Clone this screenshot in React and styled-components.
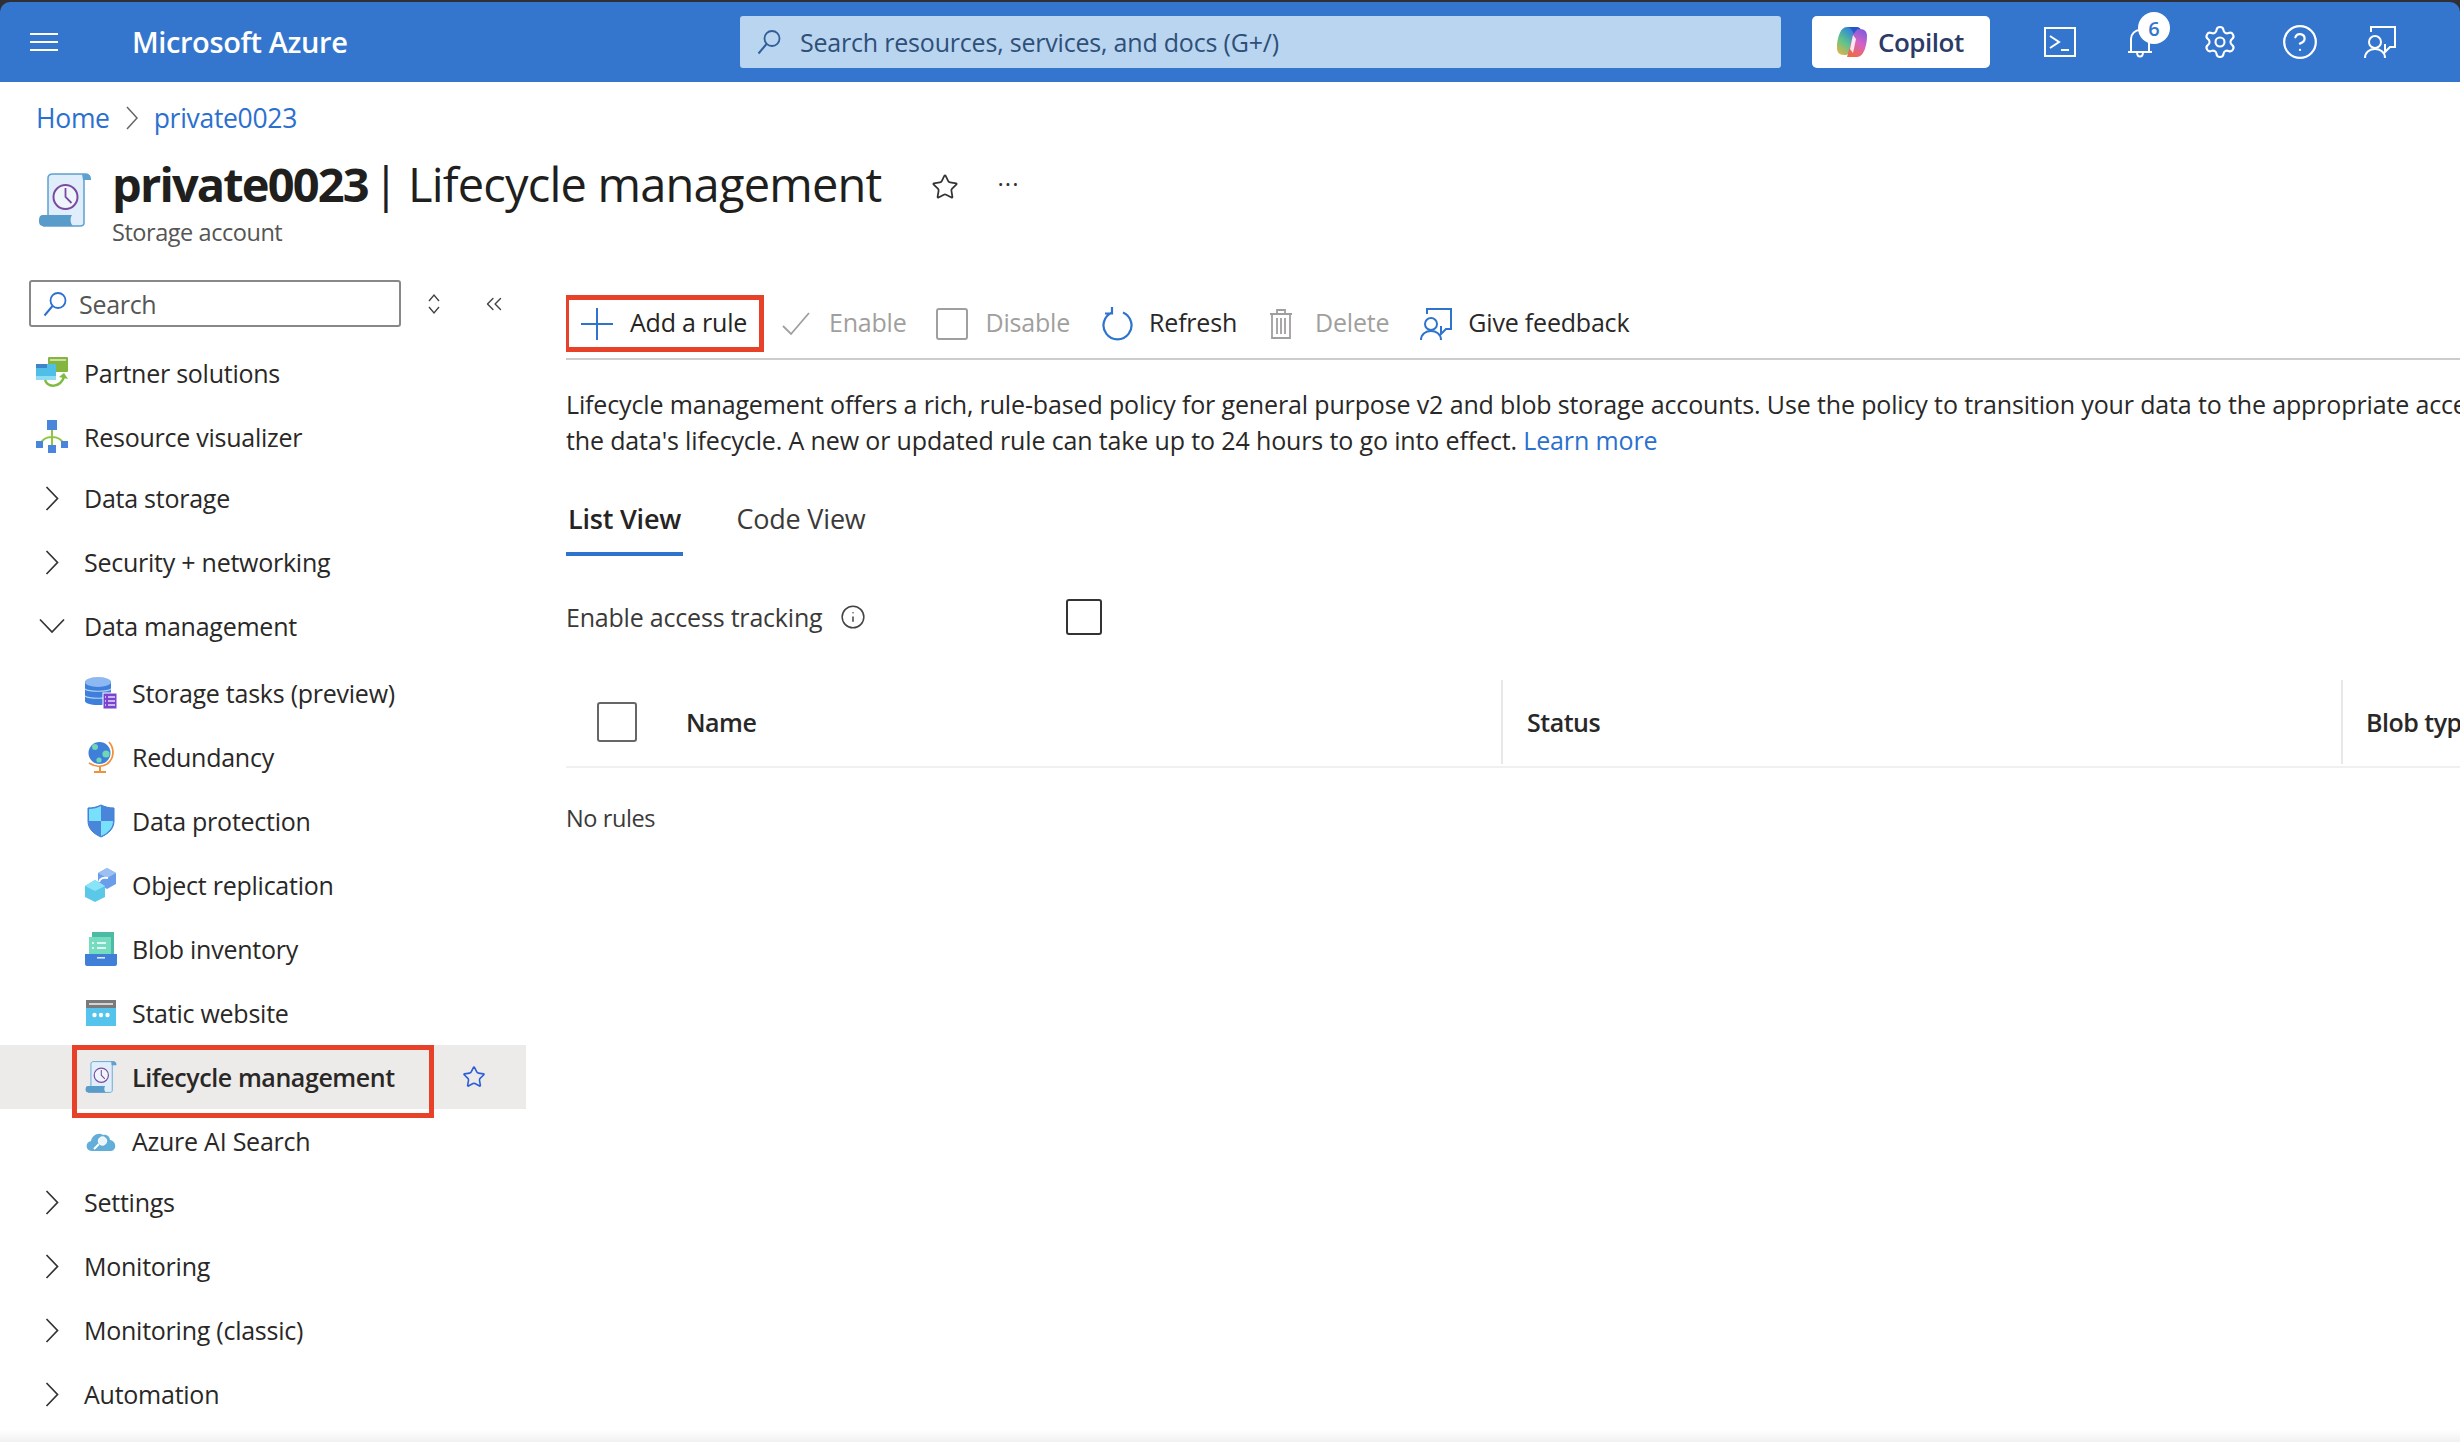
import React from 'react';
import styled, { createGlobalStyle } from 'styled-components';
import { Star, Settings, CircleHelp, ChevronsLeft, Info } from 'lucide-react';

const Global = createGlobalStyle`
  html, body { margin: 0; padding: 0; height: 1442px; overflow: hidden; background: #fff; }
  body { font-family: "Open Sans", "Noto Sans", sans-serif; color: #252423; }
  * { box-sizing: border-box; }
`;

const Page = styled.div`
  position: relative;
  width: 2460px;
  height: 1442px;
  overflow: hidden;
  background: #fff;
`;
const BottomFade = styled.div`
  position: absolute;
  left: 0; right: 0; bottom: 0;
  height: 12px;
  background: linear-gradient(#ffffff, #f1f1f1);
`;
const HeaderShell = styled.div`
  background: #303034;
  padding-top: 2px;
`;
const Header = styled.header`
  height: 80px;
  background: #3476cd;
  border-radius: 10px 10px 0 0;
  display: flex;
  align-items: center;
  position: relative;
`;
const Burger = styled.div`
  width: 28px;
  height: 18px;
  margin-left: 30px;
  border-top: 2px solid #fff;
  border-bottom: 2px solid #fff;
  position: relative;
  &::after {
    content: '';
    position: absolute;
    left: 0; right: 0; top: 6px;
    height: 2px;
    background: #fff;
  }
`;
const Brand = styled.div`
  margin-left: 74px;
  width: 608px;
  color: #fff;
  font-weight: 600;
  font-size: 29px;
  letter-spacing: -0.4px;
  margin-top: -1px;
`;
const GlobalSearch = styled.div`
  width: 1041px;
  height: 52px;
  background: #b9d5f0;
  border-radius: 3px;
  display: flex;
  align-items: center;
  padding-left: 16px;
  gap: 18px;
  color: #2f4f78;
  font-size: 25px;
  letter-spacing: -0.2px;
`;
const CopilotBtn = styled.div`
  margin-left: 31px;
  width: 178px;
  height: 52px;
  background: #fff;
  border-radius: 5px;
  display: flex;
  align-items: center;
  padding-left: 24px;
  gap: 10px;
  color: #2b3a67;
  font-weight: 600;
  font-size: 26px;
  letter-spacing: -0.5px;
`;
const HeaderIcons = styled.div`
  margin-left: 30px;
  display: flex;
  align-items: center;
  height: 100%;
`;
const HeaderIconSlot = styled.div`
  width: 80px;
  height: 100%;
  display: flex;
  align-items: center;
  justify-content: center;
  position: relative;
  color: #fff;
`;
const Badge = styled.div`
  position: absolute;
  left: 38px;
  top: 10px;
  width: 32px;
  height: 32px;
  border-radius: 50%;
  background: #fff;
  color: #3476cd;
  font-size: 20px;
  font-weight: 600;
  display: flex;
  align-items: center;
  justify-content: center;
`;

const Breadcrumb = styled.nav`
  height: 72px;
  padding-left: 36px;
  display: flex;
  align-items: center;
  gap: 16px;
  font-size: 26.5px;
  letter-spacing: -0.3px;
  color: #2b70cf;
`;
const TitleBlock = styled.div`
  height: 126px;
  padding: 1px 0 0 38px;
  display: flex;
  align-items: flex-start;
  position: relative;
`;
const TitleIcon = styled.div`
  width: 74px;
  padding-top: 18px;
  flex: none;
`;
const TitleText = styled.div`
  display: flex;
  flex-direction: column;
`;
const TitleRow = styled.div`
  display: flex;
  align-items: center;
  height: 58px;
`;
const H1 = styled.h1`
  margin: 0;
  display: flex;
  font-size: 47px;
  font-weight: 400;
  letter-spacing: -0.8px;
  white-space: nowrap;
  color: #201f1e;
  b { font-weight: 700; letter-spacing: -1.85px; }
`;
const Pipe = styled.span`
  margin: 0 10px 0 5px;
`;
const TitleActions = styled.div`
  display: flex;
  align-items: center;
  margin-left: 49px;
  margin-top: 5px;
  gap: 39px;
  color: #333;
`;
const Dots = styled.span`
  font-size: 24px;
  line-height: 1;
  letter-spacing: 1px;
  margin-top: -6px;
`;
const Subtitle = styled.div`
  font-size: 23.5px;
  color: #555;
  margin-top: 3px;
  letter-spacing: -0.45px;
`;

const Body = styled.div`
  display: grid;
  grid-template-columns: 526px 1fr;
  column-gap: 40px;
  height: 1162px;
  min-width: 0;
`;
const Sidebar = styled.aside`
  display: flex;
  flex-direction: column;
  min-width: 0;
`;
const SideTools = styled.div`
  height: 61px;
  display: flex;
  align-items: flex-start;
  padding-left: 29px;
`;
const SideSearch = styled.div`
  width: 372px;
  height: 47px;
  border: 2px solid #8a8886;
  border-radius: 3px;
  display: flex;
  align-items: center;
  padding-left: 11px;
  gap: 11px;
  color: #555;
  font-size: 25px;
  letter-spacing: -0.3px;
`;
const SideToolIcon = styled.div`
  height: 47px;
  display: flex;
  align-items: center;
  justify-content: center;
  width: ${p => p.$w}px;
  margin-left: ${p => p.$ml}px;
  color: #444;
`;
const NavList = styled.div`
  display: flex;
  flex-direction: column;
  margin-bottom: ${p => p.$mb || 0}px;
  margin-top: ${p => p.$mt || 0}px;
`;
const Row = styled.div`
  height: 64px;
  flex: none;
  display: flex;
  align-items: center;
  position: relative;
  padding-left: ${p => (p.$sub ? 85 : 36)}px;
  background: ${p => (p.$active ? '#edebe9' : 'transparent')};
  font-weight: ${p => (p.$active ? 600 : 400)};
  font-size: 25px;
  letter-spacing: ${p => (p.$active ? -0.42 : -0.25)}px;
  color: #292827;
`;
const RowIcon = styled.div`
  width: 32px;
  height: 34px;
  flex: none;
  display: flex;
  align-items: center;
  justify-content: center;
  margin-right: ${p => (p.$sub ? 15 : 16)}px;
`;
const ActiveMark = styled.div`
  position: absolute;
  left: 72px;
  top: 0;
  width: 362px;
  height: 73px;
  border: 5px solid #e8412a;
  pointer-events: none;
`;
const RowStar = styled.div`
  position: absolute;
  left: 462px;
  top: 20px;
  color: #2b5fd9;
  display: flex;
`;

const Main = styled.main`
  min-width: 0;
  overflow: hidden;
  padding-top: 15px;
`;
const Toolbar = styled.div`
  height: 65px;
  border-bottom: 2px solid #cccccc;
  display: flex;
  align-items: flex-start;
  font-size: 25px;
  letter-spacing: -0.2px;
`;
const AddRule = styled.div`
  margin-left: -2px;
  width: 200px;
  height: 57px;
  border: 5px solid #e8412a;
  display: flex;
  align-items: center;
  padding-left: 12px;
  gap: 17px;
  flex: none;
  white-space: nowrap;
  line-height: 1;
  & > span { margin-top: -2px; }
`;
const Tool = styled.div`
  height: 57px;
  display: flex;
  align-items: center;
  gap: ${p => p.$gap}px;
  margin-left: ${p => p.$ml}px;
  color: ${p => (p.$off ? '#a19f9d' : '#292827')};
  white-space: nowrap;
  flex: none;
  & > span { margin-top: -4px; }
`;
const Description = styled.p`
  margin: 26px 0 0;
  width: 2400px;
  font-size: 25px;
  line-height: 36px;
  letter-spacing: -0.14px;
  color: #292827;
`;
const DescLine = styled.span`
  display: block;
  white-space: nowrap;
`;
const LinkText = styled.a`
  color: #2b70cf;
`;
const Tabs = styled.div`
  display: flex;
  height: 72px;
  margin-top: 26px;
  gap: 52px;
`;
const Tab = styled.div`
  width: ${p => p.$w}px;
  height: 100%;
  display: flex;
  justify-content: center;
  padding-top: 16px;
  font-size: 27px;
  letter-spacing: -0.2px;
  font-weight: ${p => (p.$active ? 600 : 400)};
  color: ${p => (p.$active ? '#252423' : '#3b3a39')};
  border-bottom: ${p => (p.$active ? '4px solid #2f74cc' : 'none')};
  white-space: nowrap;
`;
const AccessRow = styled.div`
  height: 36px;
  margin-top: 43px;
  display: flex;
  align-items: center;
  font-size: 25px;
  letter-spacing: -0.2px;
  color: #3b3a39;
`;
const AccessLabel = styled.div`
  width: 500px;
  display: flex;
  align-items: center;
  gap: 18px;
`;
const Box = styled.div`
  width: ${p => p.$size}px;
  height: ${p => p.$size}px;
  border: 2px solid ${p => p.$color};
  border-radius: 3px;
  flex: none;
`;
const TableHead = styled.div`
  margin-top: 45px;
  height: 88px;
  display: flex;
  border-bottom: 2px solid #f0f0f0;
  width: 2000px;
  font-size: 25px;
  font-weight: 600;
  letter-spacing: -0.5px;
  color: #292827;
`;
const Col = styled.div`
  width: ${p => p.$w}px;
  height: 84px;
  flex: none;
  display: flex;
  align-items: center;
  padding-left: ${p => p.$pl}px;
  border-left: ${p => (p.$sep ? '2px solid #e8e8e8' : 'none')};
`;
const NameGap = styled.div`
  width: 49px;
`;
const Empty = styled.div`
  margin-top: 34px;
  font-size: 23.5px;
  letter-spacing: -0.4px;
  color: #3b3a39;
`;

const MagnifierIcon = ({ color, size = 26 }) => (
  <svg width={size} height={size} viewBox="0 0 26 26" fill="none" stroke={color} strokeWidth="1.8">
    <circle cx="16" cy="9.5" r="7.5" />
    <path d="M10.5 15 2.5 24.5" strokeWidth="2" />
  </svg>
);
const TerminalIcon = () => (
  <svg width="32" height="30" viewBox="0 0 32 30" fill="none" stroke="#fff" strokeWidth="2">
    <rect x="1" y="1" width="30" height="28" />
    <path d="M6 9l9 6-9 6M17 23h8" />
  </svg>
);
const BellIcon = () => (
  <svg width="26" height="34" viewBox="0 0 26 34" fill="none" stroke="#fff" strokeWidth="2">
    <path d="M4 27V14a9 9 0 0 1 18 0v13M1 27h24M10 27c0 6 6 6 6 0" />
  </svg>
);
const FeedbackIcon = ({ person = '#fff', bubble = '#fff', size = 34 }) => (
  <svg width={size} height={size} viewBox="0 0 34 34" fill="none" strokeWidth="2">
    <circle cx="12" cy="17" r="6" stroke={person} />
    <path d="M2 33c0-12 20-12 20 0" stroke={person} />
    <path d="M8 7V2h24v20h-5l-5 5v-8" stroke={bubble} />
  </svg>
);
const CopilotLogo = () => (
  <svg width="32" height="32" viewBox="0 0 32 32">
    <defs>
      <linearGradient id="cp1" x1="0" y1="1" x2="0.6" y2="0">
        <stop offset="0" stopColor="#f5b13d" />
        <stop offset="0.5" stopColor="#5fc48a" />
        <stop offset="1" stopColor="#2f7fe0" />
      </linearGradient>
      <linearGradient id="cp2" x1="0.4" y1="1" x2="0.8" y2="0">
        <stop offset="0" stopColor="#ef6a4a" />
        <stop offset="0.5" stopColor="#d662c4" />
        <stop offset="1" stopColor="#7a5be0" />
      </linearGradient>
    </defs>
    <path d="M11 1h10L15 23c-1 4-3 6-7 6-5 0-7-3-7-7C1 13 4 1 11 1z" fill="url(#cp1)" />
    <path d="M21 31H11l6-22c1-4 3-6 7-6 5 0 7 3 7 7 0 9-3 21-10 21z" fill="url(#cp2)" />
    <path d="M12 1h9c2 0 3 1 3.5 2-3.5 0-5.5 2-6.5 5-1.5-3-3-6-6-7z" fill="#2a55c8" />
    <path d="M14 23l3-14 3 4-3 14z" fill="#fff" fillOpacity="0.85" />
  </svg>
);
const ScrollIcon = ({ size = 54 }) => (
  <svg width={size} height={size} viewBox="0 0 54 54">
    <path d="M10 5c0-3 2-4 5-4h32c3 0 5 1 5 5h-6v44c0 2-2 3-4 3H6l4-6z" fill="#dfeefa" stroke="#5ea0d0" strokeWidth="1.5" />
    <path d="M44 1h4c3 0 5 2 5 6h-8z" fill="#5ea0d0" />
    <path d="M5 42h29c-2 3-2 8 1 11H6c-4 0-5-2-5-5 0-4 1-6 4-6z" fill="#5a9cc9" />
    <circle cx="27.5" cy="24" r="12" fill="#eef6fc" stroke="#7b4aa0" strokeWidth="2" />
    <path d="M27.5 15v9l6 6" fill="none" stroke="#7b4aa0" strokeWidth="1.8" />
  </svg>
);
const PartnerIcon = () => (
  <svg width="32" height="34" viewBox="0 0 32 34">
    <rect x="12" y="1" width="20" height="15" rx="1" fill="#86b53f" />
    <rect x="14" y="3" width="16" height="2" fill="#c9dfa3" />
    <rect x="0" y="8" width="20" height="16" rx="1" fill="#50bfe8" />
    <rect x="0" y="8" width="11" height="4" fill="#3f83c8" />
    <rect x="0" y="20" width="20" height="4" fill="#8fdcf5" />
    <path d="M9 24c3 8 15 8 19-3" fill="none" stroke="#7dbb42" strokeWidth="2.4" />
    <path d="M23 21l5-4 4 6z" fill="#7dbb42" />
  </svg>
);
const VisualizerIcon = () => (
  <svg width="32" height="34" viewBox="0 0 32 34">
    <path d="M16 8v18M16 17c-5 0-9 2-11 6M16 17c5 0 9 2 11 6" fill="none" stroke="#8dc63f" strokeWidth="2" />
    <rect x="11" y="0" width="10" height="10" fill="#4a85dc" />
    <rect x="0" y="21" width="7" height="7" fill="#4a85dc" />
    <rect x="25" y="21" width="7" height="7" fill="#4a85dc" />
    <rect x="12" y="25" width="8" height="8" fill="#4a85dc" />
  </svg>
);
const TasksIcon = () => (
  <svg width="32" height="34" viewBox="0 0 32 34">
    <path d="M0 5v20c0 2 5 4 13 4s13-2 13-4V5z" fill="#3d7fda" />
    <ellipse cx="13" cy="6" rx="13" ry="5" fill="#8db8f2" />
    <path d="M0 13c3 3 23 3 26 0M0 20c3 3 23 3 26 0" fill="none" stroke="#b6d2f5" strokeWidth="1.2" />
    <rect x="18" y="17" width="14" height="16" fill="#7a44d0" stroke="#fff" strokeWidth="1" />
    <path d="M23 21h7M23 25h7M23 29h7M20 21h1M20 25h1M20 29h1" stroke="#e6dcfa" strokeWidth="1.4" />
  </svg>
);
const GlobeIcon = () => (
  <svg width="28" height="32" viewBox="0 0 28 32">
    <circle cx="12.5" cy="12" r="11" fill="#3f7fd8" />
    <circle cx="8" cy="6" r="3" fill="#6cd8b5" />
    <circle cx="19" cy="13" r="3.6" fill="#6cd8b5" />
    <circle cx="12" cy="19" r="2.6" fill="#6cd8b5" />
    <path d="M22 1c6 7 5 17-2 22-5 3-12 3-18-1" fill="none" stroke="#f0913a" strokeWidth="1.8" />
    <path d="M13 25v5M7 31h12" stroke="#f0913a" strokeWidth="2" />
  </svg>
);
const ShieldIcon = () => (
  <svg width="28" height="34" viewBox="0 0 28 34">
    <path d="M14 1c4 2 8 3 13 3v13c0 8-6 13-13 16C7 30 1 25 1 17V4c5 0 9-1 13-3z" fill="#4a85dc" stroke="#3f7fd8" />
    <path d="M14 2v15H2V5c5 0 8-1 12-3zM14 17h12c0 7-5 12-12 15z" fill="#78e0fb" />
  </svg>
);
const CubesIcon = () => (
  <svg width="32" height="34" viewBox="0 0 32 34">
    <path d="M22 0l9 5v11l-9 5-9-5V5z" fill="#6b9eea" />
    <path d="M22 0l9 5-9 5-9-5z" fill="#9cc0f3" />
    <path d="M10 12l10 6v11l-10 5-10-5V18z" fill="#5bc8e8" />
    <path d="M10 12l10 6-10 5-10-5z" fill="#8ae4f7" />
    <path d="M14 14c1-4 5-5 9-4" fill="none" stroke="#fff" strokeWidth="2" />
  </svg>
);
const InventoryIcon = () => (
  <svg width="32" height="34" viewBox="0 0 32 34">
    <rect x="7" y="0" width="22" height="22" fill="#4dbba3" />
    <path d="M4 5h22v18H4z" fill="#76dcc0" />
    <path d="M7 11h2M12 11h9M7 16h2M12 16h9" stroke="#fff" strokeWidth="1.6" />
    <path d="M0 22h32v10c0 1-1 2-2 2H2c-1 0-2-1-2-2z" fill="#3f7fd8" />
    <rect x="12" y="25" width="8" height="1.6" fill="#d8e8fa" />
  </svg>
);
const WebsiteIcon = () => (
  <svg width="30" height="26" viewBox="0 0 30 26">
    <rect x="0" y="0" width="30" height="26" fill="#55c4ec" />
    <rect x="0" y="0" width="30" height="8" fill="#7a7a7a" />
    <rect x="3" y="3" width="24" height="2" fill="#d4d4d4" />
    <circle cx="8.5" cy="15" r="2.2" fill="#fff" />
    <circle cx="15" cy="15" r="2.2" fill="#fff" />
    <circle cx="21.5" cy="15" r="2.2" fill="#fff" />
  </svg>
);
const CloudSearchIcon = () => (
  <svg width="30" height="22" viewBox="0 0 30 22">
    <path d="M6 21c-7 0-7-9-1-10 1-6 8-9 12-6 4-1 7 2 7 5 7 1 7 11 0 11z" fill="#62aed8" />
    <circle cx="16.5" cy="11" r="4.2" fill="#eaf5fb" stroke="#fff" />
    <path d="M13 14l-5 5" stroke="#fff" strokeWidth="2" />
  </svg>
);
const UpDown = () => (
  <svg width="14" height="24" viewBox="0 0 14 24" fill="none" stroke="#444" strokeWidth="1.4">
    <path d="M2 9l5-6 5 6M2 15l5 6 5-6" />
  </svg>
);
const Refresh = () => (
  <svg width="32" height="34" viewBox="0 0 32 34" fill="none" stroke="#2f74cc" strokeWidth="2.2">
    <path d="M10 5.5a14 14 0 1 0 11 0M10 0v6.5H3" />
  </svg>
);
const Trash = () => (
  <svg width="24" height="32" viewBox="0 0 24 32" fill="none" stroke="#a19f9d" strokeWidth="1.8">
    <path d="M1 6h22M8 6V2h8v4M3 6v24h18V6M8 10v16M12 10v16M16 10v16" />
  </svg>
);
const PlusIcon = () => (
  <svg width="32" height="32" viewBox="0 0 32 32" stroke="#2f74cc" strokeWidth="2">
    <path d="M16 0v32M0 16h32" />
  </svg>
);
const CheckIcon = () => (
  <svg width="28" height="24" viewBox="0 0 28 24" fill="none" stroke="#a19f9d" strokeWidth="1.8">
    <path d="M1 14l8 8L27 1" />
  </svg>
);
const BreadChevron = () => (
  <svg width="12" height="24" viewBox="0 0 12 24" fill="none" stroke="#666" strokeWidth="1.5">
    <path d="M1 1l10 11L1 23" />
  </svg>
);

const subItems = [
  ['Storage tasks (preview)', <TasksIcon />],
  ['Redundancy', <GlobeIcon />],
  ['Data protection', <ShieldIcon />],
  ['Object replication', <CubesIcon />],
  ['Blob inventory', <InventoryIcon />],
  ['Static website', <WebsiteIcon />],
];

const Chevron = ({ open }) =>
  open ? (
    <svg width="26" height="16" viewBox="0 0 26 16" fill="none" stroke="#333" strokeWidth="1.7">
      <path d="M1 1.5l12 12.5L25 1.5" />
    </svg>
  ) : (
    <svg width="14" height="25" viewBox="0 0 14 25" fill="none" stroke="#333" strokeWidth="1.7">
      <path d="M1.5 1l11 11.5-11 11.5" />
    </svg>
  );

export default function App() {
  return (
    <Page>
      <Global />
      <HeaderShell>
        <Header>
          <Burger />
          <Brand>Microsoft Azure</Brand>
          <GlobalSearch>
            <MagnifierIcon color="#2f5f98" />
            <span>Search resources, services, and docs (G+/)</span>
          </GlobalSearch>
          <CopilotBtn>
            <CopilotLogo />
            <span>Copilot</span>
          </CopilotBtn>
          <HeaderIcons>
            <HeaderIconSlot><TerminalIcon /></HeaderIconSlot>
            <HeaderIconSlot><BellIcon /><Badge>6</Badge></HeaderIconSlot>
            <HeaderIconSlot><Settings size={36} strokeWidth={1.4} /></HeaderIconSlot>
            <HeaderIconSlot><CircleHelp size={38} strokeWidth={1.4} /></HeaderIconSlot>
            <HeaderIconSlot><FeedbackIcon /></HeaderIconSlot>
          </HeaderIcons>
        </Header>
      </HeaderShell>

      <Breadcrumb>
        <span>Home</span>
        <BreadChevron />
        <span>private0023</span>
      </Breadcrumb>

      <TitleBlock>
        <TitleIcon><ScrollIcon /></TitleIcon>
        <TitleText>
          <TitleRow>
            <H1><b>private0023</b><Pipe>|</Pipe><span>Lifecycle management</span></H1>
            <TitleActions>
              <Star size={28} strokeWidth={1.5} />
              <Dots>···</Dots>
            </TitleActions>
          </TitleRow>
          <Subtitle>Storage account</Subtitle>
        </TitleText>
      </TitleBlock>

      <Body>
        <Sidebar>
          <SideTools>
            <SideSearch>
              <MagnifierIcon color="#2b70cf" />
              <span>Search</span>
            </SideSearch>
            <SideToolIcon $w={20} $ml={23}><UpDown /></SideToolIcon>
            <SideToolIcon $w={30} $ml={35}><ChevronsLeft size={26} strokeWidth={1.3} /></SideToolIcon>
          </SideTools>
          <NavList $mb={-3}>
            <Row><RowIcon><PartnerIcon /></RowIcon>Partner solutions</Row>
            <Row><RowIcon><VisualizerIcon /></RowIcon>Resource visualizer</Row>
          </NavList>
          <Row><RowIcon><Chevron /></RowIcon>Data storage</Row>
          <Row><RowIcon><Chevron /></RowIcon>Security + networking</Row>
          <Row><RowIcon><Chevron open /></RowIcon>Data management</Row>
          <NavList $mt={3} $mb={-3}>
            {subItems.map(([label, icon]) => (
              <Row $sub key={label}><RowIcon $sub>{icon}</RowIcon>{label}</Row>
            ))}
            <Row $sub $active>
              <RowIcon $sub><ScrollIcon size={32} /></RowIcon>
              Lifecycle management
              <ActiveMark />
              <RowStar><Star size={24} strokeWidth={1.6} /></RowStar>
            </Row>
            <Row $sub><RowIcon $sub><CloudSearchIcon /></RowIcon>Azure AI Search</Row>
          </NavList>
          <Row><RowIcon><Chevron /></RowIcon>Settings</Row>
          <Row><RowIcon><Chevron /></RowIcon>Monitoring</Row>
          <Row><RowIcon><Chevron /></RowIcon>Monitoring (classic)</Row>
          <Row><RowIcon><Chevron /></RowIcon>Automation</Row>
        </Sidebar>

        <Main>
          <Toolbar>
            <AddRule><PlusIcon /><span>Add a rule</span></AddRule>
            <Tool $off $gap={19} $ml={18}><CheckIcon /><span>Enable</span></Tool>
            <Tool $off $gap={18} $ml={29}><Box $size={32} $color="#a19f9d" /><span>Disable</span></Tool>
            <Tool $gap={15} $ml={32}><Refresh /><span>Refresh</span></Tool>
            <Tool $off $gap={22} $ml={32}><Trash /><span>Delete</span></Tool>
            <Tool $gap={15} $ml={30}><FeedbackIcon person="#2f74cc" bubble="#2f74cc" /><span>Give feedback</span></Tool>
          </Toolbar>
          <Description>
            <DescLine>Lifecycle management offers a rich, rule-based policy for general purpose v2 and blob storage accounts. Use the policy to transition your data to the appropriate access tiers or to expire at the end of</DescLine>
            <DescLine>the data's lifecycle. A new or updated rule can take up to 24 hours to go into effect. <LinkText>Learn more</LinkText></DescLine>
          </Description>
          <Tabs>
            <Tab $active $w={117}>List View</Tab>
            <Tab $w={132}>Code View</Tab>
          </Tabs>
          <AccessRow>
            <AccessLabel>
              <span>Enable access tracking</span>
              <Info size={26} strokeWidth={1.4} color="#444" />
            </AccessLabel>
            <Box $size={36} $color="#333" />
          </AccessRow>
          <TableHead>
            <Col $w={935} $pl={31}>
              <Box $size={40} $color="#666" />
              <NameGap />
              <span>Name</span>
            </Col>
            <Col $w={840} $pl={24} $sep>Status</Col>
            <Col $w={220} $pl={23} $sep>Blob type</Col>
          </TableHead>
          <Empty>No rules</Empty>
        </Main>
      </Body>
      <BottomFade />
    </Page>
  );
}
